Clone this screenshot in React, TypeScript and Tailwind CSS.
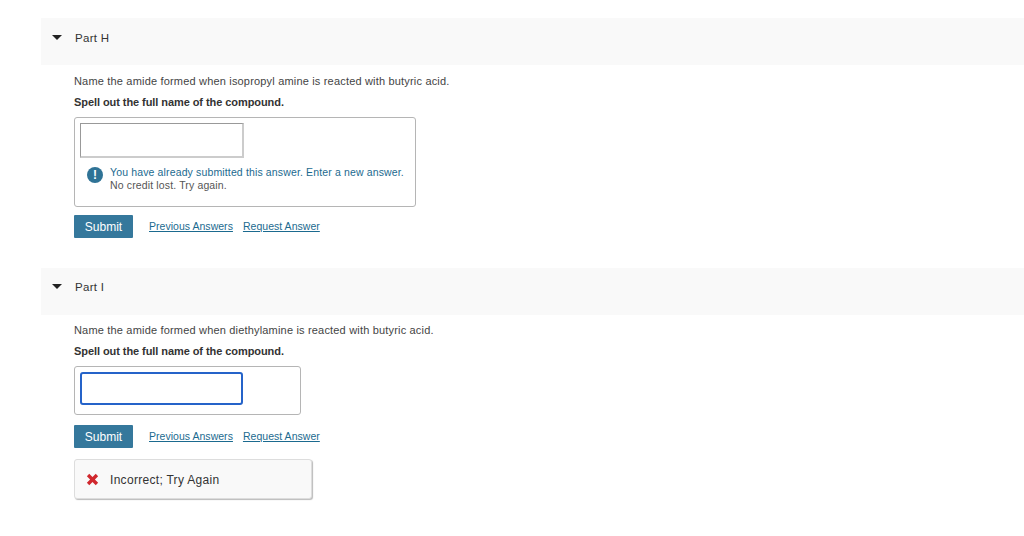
function PartHeader({ label, pad }: { label: string; pad: string }) {
  return (
    <div className={`flex h-[47px] bg-[#f9f9f9] ${pad}`}>
      <div className="ml-[11px] mt-[4px] h-0 w-0 border-x-[5px] border-t-[5px] border-x-transparent border-t-[#222]" />
      <span className="ml-[13px] text-[11.5px] font-medium leading-[14px] tracking-[0.3px] text-[#333]">{label}</span>
    </div>
  );
}

function Actions() {
  return (
    <div className="flex items-center">
      <button className="h-[23px] w-[59px] rounded-[1px] bg-[#35789c] text-[12px] text-white">Submit</button>
      <a className="ml-[16px] text-[10.5px] tracking-[0.03px] text-[#1b6a8f] underline">Previous Answers</a>
      <a className="ml-[10px] text-[10.5px] tracking-[0.03px] text-[#1b6a8f] underline">Request Answer</a>
    </div>
  );
}

export default function App() {
  return (
    <div className="h-[536px] w-[1024px] overflow-hidden bg-white pl-[41px] pt-[18px] font-['Liberation_Sans',sans-serif]">
      <PartHeader label="Part H" pad="pt-[13px]" />
      <div className="pl-[33px]">
        <p className="mt-[9px] text-[11px] leading-[14px] tracking-[0.18px] text-[#444]">Name the amide formed when isopropyl amine is reacted with butyric acid.</p>
        <p className="mt-[7px] text-[11px] font-bold leading-[14px] tracking-[-0.07px] text-[#333]">Spell out the full name of the compound.</p>
        <div className="mt-[8px] h-[90px] w-[342px] rounded-[3px] border border-[#b5b5b5] px-[5px] pt-[5px]">
          <input className="block h-[35px] w-[164px] border border-[#999] border-b-2 border-r-2 border-b-[#ccc] border-r-[#ccc] bg-white" />
          <div className="ml-[7px] mt-[8px] flex">
            <div className="mt-[1px] flex h-[16px] w-[16px] items-center justify-center rounded-full bg-[#2f7396] text-[12px] font-bold leading-none text-white">!</div>
            <div className="ml-[7px] text-[10.5px] leading-[13px] tracking-[0.14px]">
              <div className="text-[#1b6a8f]">You have already submitted this answer. Enter a new answer.</div>
              <div className="text-[#555]">No credit lost. Try again.</div>
            </div>
          </div>
        </div>
        <div className="mt-[8px]">
          <Actions />
        </div>
      </div>
      <div className="mt-[30px]">
        <PartHeader label="Part I" pad="pt-[12px]" />
      </div>
      <div className="pl-[33px]">
        <p className="mt-[8px] text-[11px] leading-[14px] tracking-[0.18px] text-[#444]">Name the amide formed when diethylamine is reacted with butyric acid.</p>
        <p className="mt-[7px] text-[11px] font-bold leading-[14px] tracking-[-0.07px] text-[#333]">Spell out the full name of the compound.</p>
        <div className="mt-[8px] h-[49px] w-[227px] rounded-[3px] border border-[#b5b5b5] px-[5px] pt-[5px]">
          <input className="block h-[33px] w-[163px] rounded-[3px] border-2 border-[#2563c9] bg-white" />
        </div>
        <div className="mt-[10px]">
          <Actions />
        </div>
        <div className="mt-[11px] flex h-[40px] w-[238px] items-center rounded-[3px] border border-[#ddd] bg-[#f9f9f9] pl-[11px] shadow-[1px_1px_1px_#bbb]">
          <svg width="13" height="13" viewBox="0 0 12 12">
            <path d="M0.8 3 3 0.8 6 3.8 9 0.8 11.2 3 8.2 6 11.2 9 9 11.2 6 8.2 3 11.2 0.8 9 3.8 6Z" fill="#d0282e" />
          </svg>
          <span className="ml-[11px] mt-[1px] text-[12px] font-medium leading-[14px] tracking-[0.3px] text-[#333]">Incorrect; Try Again</span>
        </div>
      </div>
    </div>
  );
}
